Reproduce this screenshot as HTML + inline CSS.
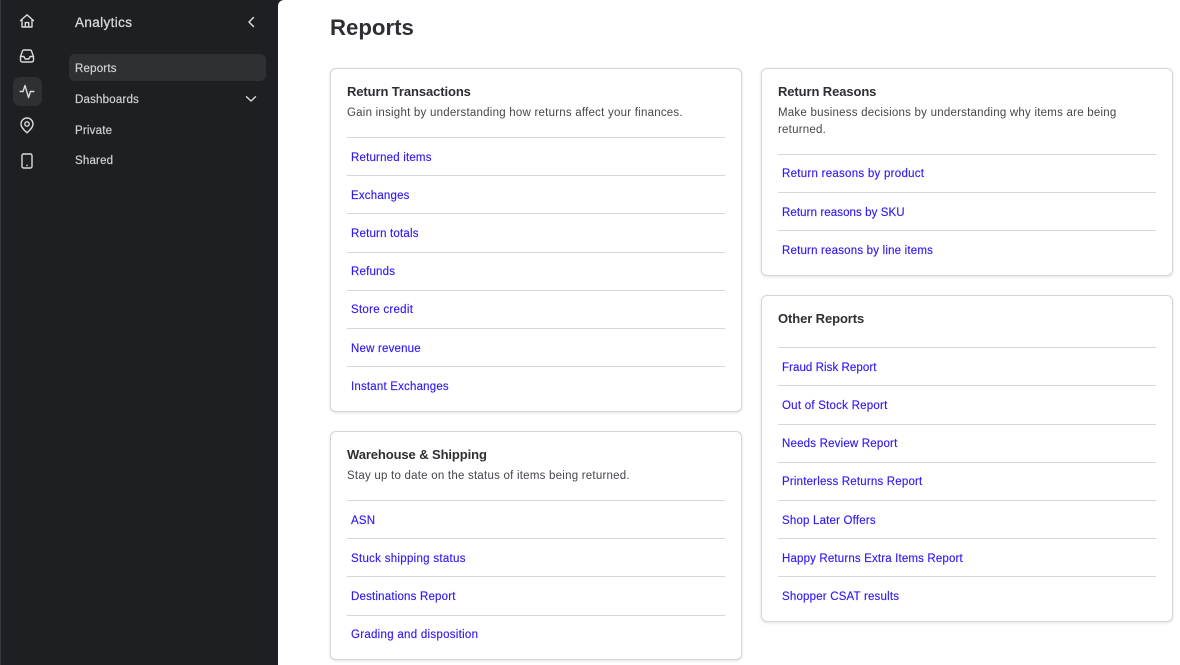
<!DOCTYPE html>
<html><head><meta charset="utf-8"><style>
html,body{margin:0;padding:0;width:1180px;height:665px;overflow:hidden;background:#1e1f22;font-family:"Liberation Sans",sans-serif}
.main{position:absolute;left:278px;top:0;width:902px;height:665px;background:#fff;border-top-left-radius:6px}
.edge{position:absolute;left:0;top:0;width:1px;height:665px;background:#36373c}
.t{position:absolute;white-space:nowrap;line-height:16px}
.nav{color:#cfd0d3;font-size:11.5px;left:75px;letter-spacing:.2px;-webkit-text-stroke:.2px #cfd0d3}
.active{position:absolute;left:69px;top:54px;width:197px;height:27px;background:#2f3034;border-radius:6px}
.ib{position:absolute;left:13px;top:77px;width:29px;height:29px;background:#2f3034;border-radius:7px}
svg{position:absolute;fill:none;stroke:#d9dadc;stroke-width:1.4;stroke-linecap:round;stroke-linejoin:round}
.card{position:absolute;box-sizing:border-box;background:#fff;border:1px solid #d5d6da;border-radius:6px;box-shadow:0 1px 3px rgba(0,0,0,.12)}
.h{position:absolute;font-size:13px;font-weight:bold;color:#2e2f33;white-space:nowrap;line-height:16px;letter-spacing:-.1px}
.d{position:absolute;font-size:11.5px;color:#45464b;white-space:nowrap;line-height:17px;letter-spacing:.23px}
.r{position:absolute;height:1px;background:#d5d6dc}
.l{position:absolute;font-size:11.5px;color:#3019f5;white-space:nowrap;line-height:16px;letter-spacing:.19px;-webkit-text-stroke:.15px #3019f5}
</style></head><body>
<div class="edge"></div>
<svg style="left:19px;top:13px" width="16" height="16" viewBox="0 0 16 16"><path d="M1.500 7.600 8 1.800l6.500 5.800M3 6.500V14h10V6.500M6.300 14V9.600h3.400V14"/></svg>
<svg style="left:19px;top:48px" width="16" height="16" viewBox="0 0 16 16"><path d="M1.500 8.500 3.600 2.800Q3.900 2 4.800 2h6.400q.9 0 1.200.8l2.100 5.700V12q0 2-2 2h-9q-2 0-2-2ZM1.500 8.500h3.300L6.300 11h3.400l1.500-2.500h3.300"/></svg>
<div class="ib"></div>
<svg style="left:19px;top:83px" width="16" height="17" viewBox="0 0 16 17"><path d="M1.200 8.500H4L6 2.500l3.500 12 2-6h3.300"/></svg>
<svg style="left:20px;top:117px" width="14" height="17" viewBox="0 0 14 17"><path d="M7 15.800C4.500 13.500 1 10.500 1 7a6 6 0 0 1 12 0c0 3.500-3.500 6.500-6 8.800Z"/><circle cx="7" cy="7" r="2.200"/></svg>
<svg style="left:21px;top:153px" width="12" height="16" viewBox="0 0 12 16"><rect x="1" y="1" width="10" height="14" rx="1.500"/><path d="M6 12.400v.1" stroke-width="1.600"/></svg>

<div class="t" style="left:75px;top:15px;color:#d6d7da;font-size:13.5px;letter-spacing:.38px;-webkit-text-stroke:.3px #d6d7da">Analytics</div>
<svg style="left:246px;top:16px" width="10" height="12" viewBox="0 0 10 12"><path d="M7.500 1.500 3 6l4.500 4.500" stroke-width="1.500"/></svg>
<div class="active"></div>
<div class="t nav" style="top:61px">Reports</div>
<div class="t nav" style="top:92px">Dashboards</div>
<svg style="left:245px;top:94px" width="12" height="10" viewBox="0 0 12 10"><path d="M1.500 2.800 6 7l4.500-4.200" stroke-width="1.400"/></svg>
<div class="t nav" style="top:123px">Private</div>
<div class="t nav" style="top:153px">Shared</div>

<div class="main"></div>
<div class="t" style="left:330px;top:14px;font-size:22.2px;font-weight:bold;color:#2e2f33;line-height:27px">Reports</div>

<div class="card" style="left:330px;top:68px;width:412px;height:344px"></div>
<div class="h" style="left:347px;top:84px">Return Transactions</div>
<div class="d" style="left:347px;top:105px">Gain insight by understanding how returns affect your finances.</div>
<div class="r" style="left:347px;top:137px;width:378px"></div><div class="l" style="left:351px;top:150px">Returned items</div>
<div class="r" style="left:347px;top:175px;width:378px"></div><div class="l" style="left:351px;top:188px">Exchanges</div>
<div class="r" style="left:347px;top:213px;width:378px"></div><div class="l" style="left:351px;top:226px">Return totals</div>
<div class="r" style="left:347px;top:252px;width:378px"></div><div class="l" style="left:351px;top:264px">Refunds</div>
<div class="r" style="left:347px;top:290px;width:378px"></div><div class="l" style="left:351px;top:302px;letter-spacing:.28px">Store credit</div>
<div class="r" style="left:347px;top:328px;width:378px"></div><div class="l" style="left:351px;top:341px">New revenue</div>
<div class="r" style="left:347px;top:366px;width:378px"></div><div class="l" style="left:351px;top:379px">Instant Exchanges</div>

<div class="card" style="left:330px;top:431px;width:412px;height:229px"></div>
<div class="h" style="left:347px;top:447px">Warehouse &amp; Shipping</div>
<div class="d" style="left:347px;top:468px">Stay up to date on the status of items being returned.</div>
<div class="r" style="left:347px;top:500px;width:378px"></div><div class="l" style="left:351px;top:513px">ASN</div>
<div class="r" style="left:347px;top:538px;width:378px"></div><div class="l" style="left:351px;top:551px;letter-spacing:.29px">Stuck shipping status</div>
<div class="r" style="left:347px;top:576px;width:378px"></div><div class="l" style="left:351px;top:589px">Destinations Report</div>
<div class="r" style="left:347px;top:615px;width:378px"></div><div class="l" style="left:351px;top:627px;letter-spacing:.28px">Grading and disposition</div>

<div class="card" style="left:761px;top:68px;width:412px;height:208px"></div>
<div class="h" style="left:778px;top:84px">Return Reasons</div>
<div class="d" style="left:778px;top:105px">Make business decisions by understanding why items are being</div>
<div class="d" style="left:778px;top:122px">returned.</div>
<div class="r" style="left:778px;top:154px;width:378px"></div><div class="l" style="left:782px;top:166px;letter-spacing:.27px">Return reasons by product</div>
<div class="r" style="left:778px;top:192px;width:378px"></div><div class="l" style="left:782px;top:205px;letter-spacing:.09px">Return reasons by SKU</div>
<div class="r" style="left:778px;top:230px;width:378px"></div><div class="l" style="left:782px;top:243px">Return reasons by line items</div>

<div class="card" style="left:761px;top:295px;width:412px;height:327px"></div>
<div class="h" style="left:778px;top:311px">Other Reports</div>
<div class="r" style="left:778px;top:347px;width:378px"></div><div class="l" style="left:782px;top:360px;letter-spacing:.07px">Fraud Risk Report</div>
<div class="r" style="left:778px;top:385px;width:378px"></div><div class="l" style="left:782px;top:398px;letter-spacing:.24px">Out of Stock Report</div>
<div class="r" style="left:778px;top:424px;width:378px"></div><div class="l" style="left:782px;top:436px">Needs Review Report</div>
<div class="r" style="left:778px;top:462px;width:378px"></div><div class="l" style="left:782px;top:474px">Printerless Returns Report</div>
<div class="r" style="left:778px;top:500px;width:378px"></div><div class="l" style="left:782px;top:513px">Shop Later Offers</div>
<div class="r" style="left:778px;top:538px;width:378px"></div><div class="l" style="left:782px;top:551px;letter-spacing:.16px">Happy Returns Extra Items Report</div>
<div class="r" style="left:778px;top:576px;width:378px"></div><div class="l" style="left:782px;top:589px">Shopper CSAT results</div>
</body></html>
